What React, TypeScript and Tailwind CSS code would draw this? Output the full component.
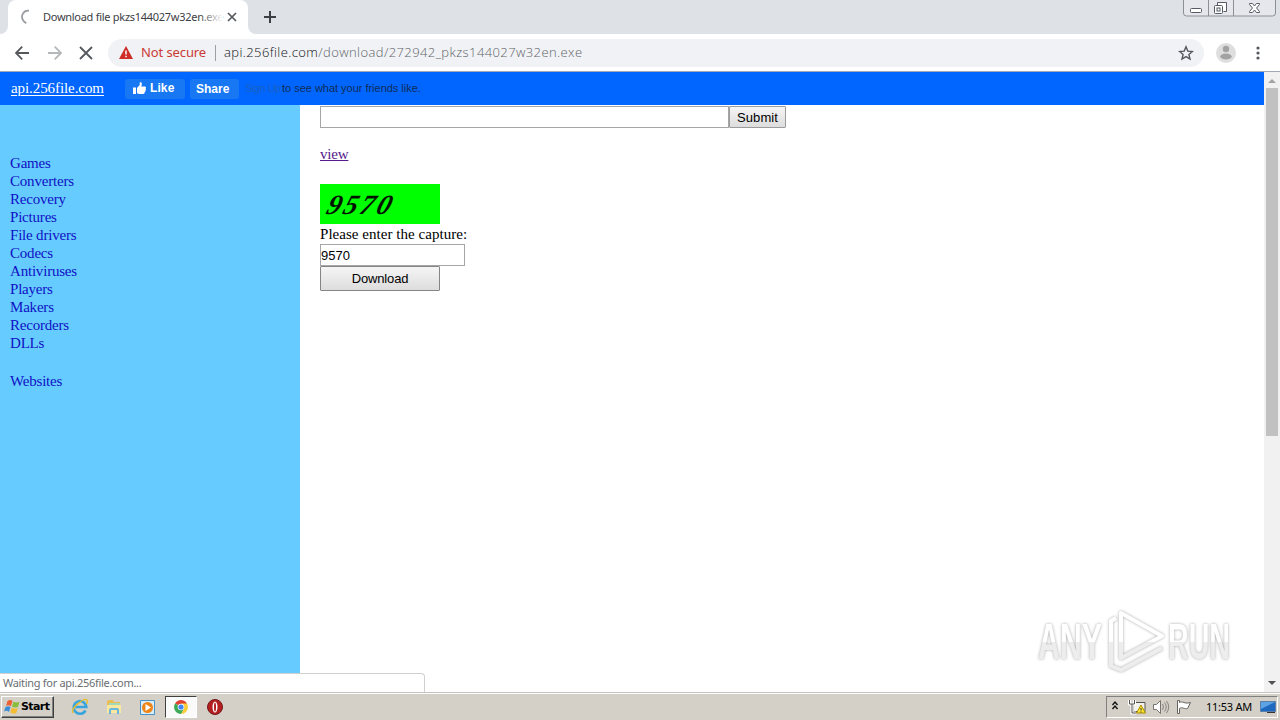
import type { ReactNode } from "react";

const categories = [
  "Games",
  "Converters",
  "Recovery",
  "Pictures",
  "File drivers",
  "Codecs",
  "Antiviruses",
  "Players",
  "Makers",
  "Recorders",
  "DLLs",
];

const TabStrip = () => (
  <div className="flex h-[34px] bg-[#dee1e6] pl-2">
    <div className="relative flex h-[34px] w-[240px] items-center rounded-t-lg bg-white pl-3 font-['Noto_Sans',sans-serif]">
      <svg className="absolute bottom-0 -left-2" width="8" height="8">
        <path d="M8 0v8H0a8 8 0 0 0 8-8" fill="#fff" />
      </svg>
      <svg className="absolute -right-2 bottom-0" width="8" height="8">
        <path d="M0 0v8h8a8 8 0 0 1-8-8" fill="#fff" />
      </svg>
      <svg width="16" height="16" viewBox="0 0 16 16" className="shrink-0">
        <path d="M9 1.700C3.500 1 .2 7 3.200 11.500c.8 1.200 1.700 2 3.100 2.600" fill="none" stroke="#9a9da1" strokeWidth="1.800" />
      </svg>
      <div className="relative ml-[7px] h-5 w-[176px] text-[11px] leading-5 tracking-[-0.28px] whitespace-nowrap text-[#3c4043]">
        Download file pkzs144027w32en.exe
        <div className="absolute top-0 -right-1 h-5 w-6 bg-linear-to-r from-transparent to-white" />
      </div>
      <svg width="10" height="10" viewBox="0 0 10 10" className="ml-[8px] shrink-0">
        <path d="M1 1l8 8M9 1L1 9" stroke="#54585d" strokeWidth="1.700" />
      </svg>
    </div>
    <svg width="12" height="12" viewBox="0 0 12 12" className="mt-[11px] ml-4">
      <path d="M6 0v12M0 6h12" stroke="#3c4043" strokeWidth="2" />
    </svg>
    <svg width="94" height="18" viewBox="0 0 94 18" className="mr-[3px] ml-auto">
      <path d="M.5 0v13q0 3 3 3h86q3 0 3-3V0M25.500 0v16M50.500 0v16" fill="#e5e7ec" stroke="#8b8f97" />
      <rect x="7.500" y="8.500" width="11" height="4" rx="1" fill="#fff" stroke="#555b65" />
      <path d="M34.500 5.500V2.500h9v9h-3" fill="#fff" stroke="#555b65" />
      <rect x="31.500" y="5.500" width="8" height="8" rx="1" fill="#fff" stroke="#555b65" />
      <rect x="34" y="8" width="3" height="3" fill="#fff" stroke="#555b65" />
      <path d="M66.500 3.500h3l2 2.500 2-2.500h3v1L73.500 8l3 3.500v1h-3l-2-2.500-2 2.500h-3v-1l3-3.500-3-3.500z" fill="#fff" stroke="#555b65" />
    </svg>
  </div>
);

const AddressBar = () => (
  <div className="flex h-[38px] items-center border-b border-[#a2a9b4] bg-white pl-[15px]">
    <svg width="78" height="14" viewBox="0 0 78 14" fill="none" strokeWidth="1.800" className="shrink-0">
      <path d="M14 7H1M7.200.7L.9 7l6.300 6.300" stroke="#54585d" />
      <path d="M33 7h13M39.700.7L46 7l-6.300 6.300" stroke="#b5b8bb" />
      <path d="M65 1l12 12M77 1L65 13" stroke="#54585d" />
    </svg>
    <div className="ml-[15px] flex h-[28px] w-[1096px] items-center rounded-full bg-[#f0f2f5] pl-[11px] font-['Noto_Sans',sans-serif] text-[13px] whitespace-nowrap">
      <svg width="14" height="13" viewBox="0 0 14 13" className="shrink-0">
        <path d="M7 0l7 13H0z" fill="#cf2d27" />
        <path d="M7 4.500v4M7 9.700v1.500" stroke="#fff" strokeWidth="1.500" />
      </svg>
      <span className="ml-2 w-[74px] tracking-[-0.1px] text-[#cc3a36]">Not secure</span>
      <span className="mr-2 h-4 w-px bg-[#9aa0a6]" />
      <span className="font-['Open_Sans',sans-serif] tracking-[0.4px] font-light text-[#5f6368]">
        <span className="text-[#101114]">api.256file.com</span>/download/272942_pkzs144027w32en.exe
      </span>
      <svg width="16" height="16" viewBox="0 0 16 16" className="mr-[10px] ml-auto">
        <path d="M8 1.800l1.800 4.300 4.600.4-3.500 3 1.100 4.500-4-2.400L4 14l1.100-4.500-3.500-3 4.600-.4z" fill="none" stroke="#54585d" strokeWidth="1.400" />
      </svg>
    </div>
    <svg width="20" height="20" viewBox="0 0 20 20" className="ml-[12px]">
      <circle cx="10" cy="10" r="10" fill="#dedede" />
      <circle cx="10" cy="6" r="3.200" fill="#a2a2a2" />
      <ellipse cx="10" cy="13.500" rx="5.700" ry="3" fill="#a2a2a2" />
    </svg>
    <svg width="4" height="14" viewBox="0 0 4 14" fill="#54585d" className="ml-[20px]">
      <circle cx="2" cy="2" r="1.600" />
      <circle cx="2" cy="7" r="1.600" />
      <circle cx="2" cy="12" r="1.600" />
    </svg>
  </div>
);

const SiteHeader = () => (
  <header className="flex h-[33px] items-center bg-[#0066ff] pl-[11px]">
    <a href="#" className="w-[114px] text-[15px] leading-5 tracking-[-0.08px] text-white underline">
      <span className="relative -top-px">api.256file.com</span>
    </a>
    <div className="flex items-center font-['Liberation_Sans',sans-serif] text-[11px] whitespace-nowrap">
      <div className="flex h-5 w-[60px] items-center rounded-[3px] bg-[#1877f2] pl-2 font-bold text-white">
        <svg width="13" height="13" viewBox="0 0 13 13" fill="#fff" className="mr-[4px]">
          <path d="M0 5.500h3V12H0zM4 6l2.700-3V.5C9-.2 9.300 2 8.300 4.500h3.500c1.400.2 1.500 1.400.7 2 .8.700.5 1.700-.3 2 .5.800.1 1.500-.7 1.800.3 1-.2 1.700-1.200 1.700H6L4 11.200z" />
        </svg>
        <span className="-mt-px text-[12px] tracking-[0.1px]">Like</span>
      </div>
      <div className="ml-[5px] h-5 w-[49px] rounded-[3px] bg-[#1877f2] pl-[6px] text-[12px] leading-5 font-bold text-white">Share</div>
      <span className="ml-[6px] w-[37px] tracking-[-0.5px] text-[#1a60c4]">Sign Up</span>
      <span className="tracking-[-0.02px] text-[#102c55]">to see what your friends like.</span>
    </div>
  </header>
);

const Sidebar = () => (
  <nav className="w-[300px] bg-[#66ccff] pt-[49px] pl-[10px] text-[15px] leading-[18px] tracking-[-0.2px] text-[#1010c4]">
    <ul>
      {categories.map((name) => (
        <li key={name}>
          <a href="#">{name}</a>
        </li>
      ))}
      <li className="mt-5">
        <a href="#">Websites</a>
      </li>
    </ul>
  </nav>
);

const Content = () => (
  <main className="flex-1 bg-white pt-px pl-5">
    <div className="flex h-[22px] font-['Liberation_Sans',sans-serif] text-[13px]">
      <div className="w-[409px] border border-[#a6a6a6] bg-white" />
      <button className="w-[57px] rounded-[1px] border border-[#9b9b9b] bg-linear-to-b from-[#f5f5f5] to-[#dddddd] pt-px tracking-[0.1px]">Submit</button>
    </div>
    <a href="#" className="mt-[16px] block text-[15px] leading-[20px] tracking-[-0.2px] text-[#551a8b] underline">view</a>
    <div className="mt-[20px] h-10 w-[120px] overflow-hidden bg-[#00ff00] pl-[8px] text-[28px] leading-[41px] font-bold tracking-[2.600px] text-[#001400] italic">
      <span className="inline-block -skew-x-[18deg]">9570</span>
    </div>
    <div className="h-5 text-[15px] leading-[21px] tracking-[0.04px]">Please enter the capture:</div>
    <div className="h-[22px] w-[145px] border border-[#a6a6a6] font-['Liberation_Sans',sans-serif] text-[13px] leading-[21px]">9570</div>
    <button className="block h-[25px] w-[120px] rounded-[1px] border border-[#858585] bg-linear-to-b from-[#f5f5f5] to-[#dddddd] pt-px font-['Liberation_Sans',sans-serif] text-[13px] tracking-[-0.15px]">
      Download
    </button>
  </main>
);

const Scrollbar = () => (
  <div className="flex w-4 flex-col items-center bg-[#f1f1f1]">
    <svg width="16" height="16">
      <path d="M4 11h8L8 7z" fill="#a3a3a3" />
    </svg>
    <div className="h-[348px] w-3 bg-[#c1c1c1]" />
    <svg width="16" height="16" className="mt-auto">
      <path d="M4 5h8L8 9z" fill="#505050" />
    </svg>
  </div>
);

const Watermark = () => (
  <svg
    width="210"
    height="76"
    viewBox="0 0 210 76"
    className="absolute top-[602px] left-[1030px] font-['Liberation_Sans',sans-serif] drop-shadow-[0_0_1.5px_#a8a8a8]"
  >
    <defs>
      <linearGradient id="fade" x1="0" y1="0" x2="0" y2="76" gradientUnits="userSpaceOnUse">
        <stop offset="0.52" stopColor="#fff" />
        <stop offset="0.53" stopColor="#ededed" />
      </linearGradient>
    </defs>
    <g fill="url(#fade)" fontSize="50" fontWeight="bold">
      <text x="8" y="57" textLength="64" lengthAdjust="spacingAndGlyphs">ANY</text>
      <text x="138" y="57" textLength="62" lengthAdjust="spacingAndGlyphs">RUN</text>
    </g>
    <g fill="none" stroke="url(#fade)" strokeWidth="4" strokeLinejoin="round">
      <path d="M91 11v45l41-22z" />
      <path d="M86 16l-5 3v45l10 4 41-22" />
    </g>
  </svg>
);

const TrayIcons = () => (
  <svg width="90" height="18" viewBox="0 0 90 18" className="ml-[3px] shrink-0">
    <path d="M2.500 7l2.500-3 2.500 3M2.500 11l2.500-3 2.500 3" fill="none" stroke="#111" strokeWidth="1.400" />
    <path d="M23 4.500h12v9H23z" fill="#f3f1ed" stroke="#55534e" />
    <path d="M19.500 2v4h5V2M22 6v9h4" fill="none" stroke="#fff" strokeWidth="3" />
    <path d="M19.500 2v4h5V2M22 6v9h4" fill="none" stroke="#55534e" />
    <path d="M31 7l4.500 8h-9z" fill="#ffe52c" stroke="#a98d00" />
    <path d="M31 10v2.500M31 13.500v1" stroke="#333" />
    <path d="M43.500 6.500h3l4-4v13l-4-4h-3z" fill="#fff" stroke="#77746e" />
    <path d="M52.500 6q2 3 0 6M54.500 4.500q3.500 4.500 0 9M56.500 3q4.500 6 0 12" fill="none" stroke="#88857f" />
    <path d="M67.500 2.500h2v2c3-2 5 2 11 0l-3 6c-3 1-5-2-8 0v5h-2z" fill="#fff" stroke="#66635e" />
  </svg>
);

const LaunchItem = ({ active, children }: { active?: boolean; children: ReactNode }) => (
  <div
    className={
      active
        ? "flex h-[22px] w-8 items-center justify-center border border-t-[#404040] border-r-white border-b-white border-l-[#404040] bg-[#fafafa]"
        : "flex h-[22px] w-[34px] items-center justify-center"
    }
  >
    {children}
  </div>
);

const Taskbar = () => (
  <div className="flex h-[28px] items-center border-t border-[#c5c2bd] bg-[#d4d0c8] pt-px pl-px font-['DejaVu_Sans',sans-serif] shadow-[inset_0_1px_0_#ffffff]">
    <div className="flex h-[22px] w-[53px] items-center border border-t-white border-r-[#404040] border-b-[#404040] border-l-white pl-[2px] text-[11px] font-bold tracking-[-0.600px] shadow-[inset_-1px_-1px_0_#808080]">
      <svg width="17" height="16" viewBox="0 0 16 16" className="shrink-0">
        <path d="M3 2q3-2 5 0L6.500 7q-3-1.500-5 0z" fill="#ed6032" />
        <path d="M9 2.500q3 2 6 0L13.500 8q-3 1-6-.5z" fill="#89bd3b" />
        <path d="M1 8q3-1.500 5 0l-1.500 5q-2-2-5-.5z" fill="#3c8dd7" />
        <path d="M7.300 8.500q3 2 6 .5l-1.500 5q-3 1.500-6-.5z" fill="#f4bb33" />
      </svg>
      Start
    </div>
    <div className="ml-[9px] flex items-center">
      <LaunchItem>
        <svg width="18" height="18" viewBox="0 0 18 18" fill="none">
          <path d="M14.500 12.500A6.300 6.300 0 1 1 15.300 9H4" stroke="#39a5df" strokeWidth="2.600" />
          <path d="M2 15C-1 11 13-1 16 2c1 1 .5 2-.5 4" stroke="#e6bd31" strokeWidth="1.500" />
        </svg>
      </LaunchItem>
      <LaunchItem>
        <svg width="16" height="16" viewBox="0 0 16 16">
          <path d="M1 3l1-2h5l1 2h6v10H1z" fill="#e9bd54" />
          <path d="M3 4h11v5H3z" fill="#a4d8ba" />
          <path d="M1 6h14v8H1z" fill="#fae89e" />
          <path d="M3 15v-4q0-2 2-2h6q2 0 2 2v4h-2v-4H5v4z" fill="#68b5df" />
        </svg>
      </LaunchItem>
      <LaunchItem>
        <svg width="17" height="17" viewBox="0 0 17 17" className="mr-[2px]">
          <path d="M1.500 1.500h14v14h-14z" fill="#d9eefb" stroke="#4b91c5" />
          <circle cx="8.500" cy="8.500" r="5.500" fill="#ef8419" />
          <path d="M6.500 5v7l5.500-3.500z" fill="#fff" />
        </svg>
      </LaunchItem>
      <LaunchItem active>
        <svg width="14" height="14" viewBox="0 0 14 14">
          <path d="M7 7L1 3.500a7 7 0 0 1 12 0z" fill="#df4233" />
          <path d="M7 7L1 3.500A7 7 0 0 0 7 14l3-5z" fill="#3daa56" />
          <path d="M7 3.500h6A7 7 0 0 1 7 14l3-5z" fill="#f9cd37" />
          <circle cx="7" cy="7" r="3.300" fill="#fff" />
          <circle cx="7" cy="7" r="2.600" fill="#4285f4" />
        </svg>
      </LaunchItem>
      <LaunchItem>
        <svg width="16" height="16" viewBox="0 0 16 16" className="ml-px">
          <circle cx="8" cy="8" r="7.500" fill="#b51e20" stroke="#70191b" />
          <ellipse cx="8" cy="8" rx="2.500" ry="5.500" fill="#fff" />
          <ellipse cx="8" cy="8" rx="1" ry="4.500" fill="#b51e20" />
        </svg>
      </LaunchItem>
    </div>
    <div className="mr-[2px] ml-auto flex h-[22px] w-[172px] items-center border border-t-[#808080] border-r-white border-b-white border-l-[#808080] text-[11px]">
      <TrayIcons />
      <span className="ml-[6px] w-[48px] font-['Noto_Sans',sans-serif] tracking-[-0.250px] whitespace-nowrap">11:53 AM</span>
      <svg width="16" height="14" viewBox="0 0 16 14" className="ml-[6px] shrink-0">
        <path d="M.5 1.500h15v10H.5z" fill="#1e69bf" stroke="#5a7fa8" />
        <path d="M1 2h14L1 9z" fill="#5ba3e4" />
        <path d="M7 12h8v1H7z" fill="#333" />
      </svg>
    </div>
  </div>
);

export default function App() {
  return (
    <div className="relative flex h-[720px] w-[1280px] flex-col overflow-hidden bg-white font-['Liberation_Serif',serif] text-black">
      <TabStrip />
      <AddressBar />
      <div className="flex min-h-0 flex-1">
        <div className="flex flex-1 flex-col">
          <SiteHeader />
          <div className="flex flex-1">
            <Sidebar />
            <Content />
          </div>
        </div>
        <Scrollbar />
      </div>
      <Taskbar />
      <div className="absolute top-[673px] left-0 h-[19px] w-[425px] rounded-tr border-t border-r border-[#d0d0d0] bg-white pl-[3px] font-['Noto_Sans',sans-serif] text-[11px] leading-[18px] tracking-[-0.300px] text-[#6b6e72]">
        Waiting for api.256file.com...
      </div>
      <Watermark />
    </div>
  );
}
